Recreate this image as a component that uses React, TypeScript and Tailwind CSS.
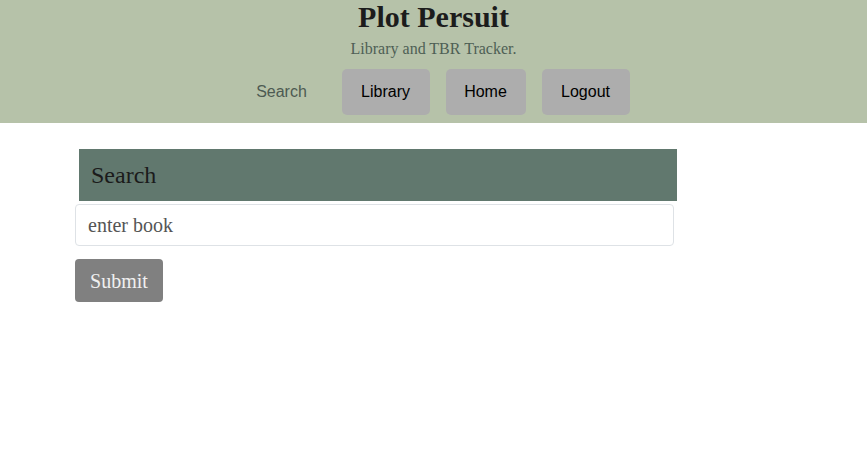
import React from "react";

const serif = "font-['Liberation_Serif','DejaVu_Serif',serif]";

const NavItem: React.FC<{ label: string; width: string; active?: boolean }> = ({ label, width, active }) => (
  <div
    className={`${width} h-[46px] flex items-center justify-center text-[16px] ${
      active ? "text-[#4d5a52]" : "text-black bg-[#adadad] rounded-[5px]"
    }`}
  >
    {label}
  </div>
);

export default function App() {
  return (
    <div className="min-h-[457px] w-full bg-white font-['Liberation_Sans',Arial,sans-serif]">
      <header className="h-[123px] bg-[#b6c2a9] flex flex-col items-center">
        <h1 className={`${serif} text-[30px] leading-[34px] font-bold text-[#1c1c1c]`}>Plot Persuit</h1>
        <p className={`${serif} text-[16px] leading-[18px] mt-[6px] text-[#4e5f55]`}>Library and TBR Tracker.</p>
        <nav className="flex gap-4 mt-[11px]">
          <NavItem label="Search" width="w-[88px]" active />
          <NavItem label="Library" width="w-[88px]" />
          <NavItem label="Home" width="w-[80px]" />
          <NavItem label="Logout" width="w-[88px]" />
        </nav>
      </header>
      <main className="pl-[75px] pt-[26px] w-[674px] box-content">
        <div className="ml-[4px] w-[598px] h-[52px] bg-[#61786e] flex items-center px-[12px]">
          <h2 className={`${serif} text-[24px] text-[#1b1b1b]`}>Search</h2>
        </div>
        <input
          className={`${serif} mt-[3px] w-[599px] h-[42px] border border-[#dee2e6] rounded-[4px] px-[12px] text-[20px] placeholder:text-[#555] outline-none`}
          placeholder="enter book"
        />
        <button className={`${serif} mt-[13px] w-[88px] h-[43px] bg-[#808080] rounded-[4px] text-[20px] text-[#f0f0f0]`}>
          Submit
        </button>
      </main>
    </div>
  );
}
